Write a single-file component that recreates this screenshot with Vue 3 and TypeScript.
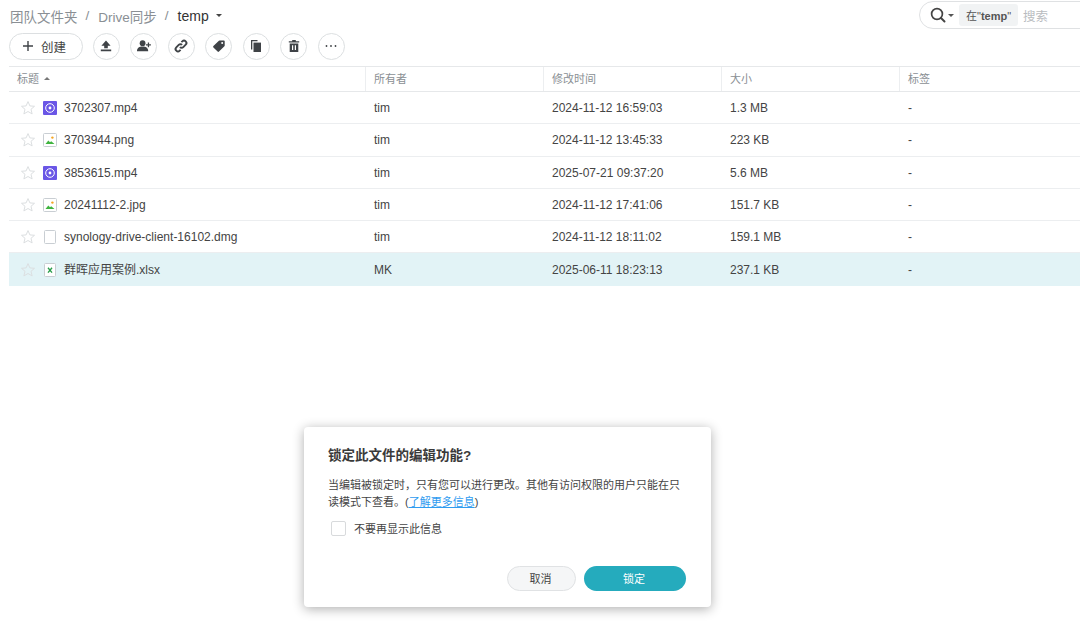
<script setup lang="ts">
interface FileRow {
  name: string
  kind: 'video' | 'image' | 'blank' | 'excel'
  owner: string
  time: string
  size: string
  selected?: boolean
}

const rows: FileRow[] = [
  { name: '3702307.mp4', kind: 'video', owner: 'tim', time: '2024-11-12 16:59:03', size: '1.3 MB' },
  { name: '3703944.png', kind: 'image', owner: 'tim', time: '2024-11-12 13:45:33', size: '223 KB' },
  { name: '3853615.mp4', kind: 'video', owner: 'tim', time: '2025-07-21 09:37:20', size: '5.6 MB' },
  { name: '20241112-2.jpg', kind: 'image', owner: 'tim', time: '2024-11-12 17:41:06', size: '151.7 KB' },
  { name: 'synology-drive-client-16102.dmg', kind: 'blank', owner: 'tim', time: '2024-11-12 18:11:02', size: '159.1 MB' },
  { name: '群晖应用案例.xlsx', kind: 'excel', owner: 'MK', time: '2025-06-11 18:23:13', size: '237.1 KB', selected: true },
]
</script>

<template>
  <div class="page">
    <div class="top">
      <nav class="crumbs">
        <span>团队文件夹</span><i>/</i><span>Drive同步</span><i>/</i><b>temp</b><em class="caret"></em>
      </nav>
      <div class="search">
        <svg width="18" height="18" viewBox="0 0 18 18"><circle cx="8" cy="8" r="5.4" fill="none" stroke="#444" stroke-width="1.7" /><path d="M12 12l3.500 3.500" stroke="#444" stroke-width="2" stroke-linecap="round" /></svg>
        <em class="caret small"></em>
        <span class="scope">在"<b>temp</b>"</span>
        <span class="hint">搜索</span>
      </div>
    </div>

    <div class="tools">
      <button class="create"><svg class="plus" viewBox="0 0 12 12"><path d="M5.300 1h1.400v4.300H11v1.400H6.700V11H5.300V6.700H1V5.300h4.300z" /></svg>创建</button>
      <button class="tool"><svg viewBox="0 0 16 16"><path d="M8 2.600 3.400 7.800h2.800v2.400h3.600V7.800h2.800zM2.800 11.400h10.400v1.800H2.800z" /></svg></button>
      <button class="tool"><svg viewBox="0 0 16 16"><circle cx="6.600" cy="5.200" r="2.900" /><path d="M1 13.200c0-3.200 2.400-4.600 5.600-4.600s5.600 1.400 5.600 4.600zM11.800 4.400h1.300v1.800h1.800v1.300h-1.800v1.800h-1.300V7.500H10V6.200h1.800z" /></svg></button>
      <button class="tool"><svg viewBox="0 0 16 16" class="line"><path d="M6.900 9.100a2.400 2.400 0 0 0 3.400 0l2.400-2.400a2.400 2.400 0 0 0-3.400-3.400L8.400 4.200M9.100 6.900a2.400 2.400 0 0 0-3.400 0L3.300 9.300a2.400 2.400 0 0 0 3.400 3.400l.9-.9" /></svg></button>
      <button class="tool"><svg viewBox="0 0 16 16"><path d="M8.600 2.400h4.300a.8.8 0 0 1 .8.800v4.300a1 1 0 0 1-.3.700l-5.400 5.400a1 1 0 0 1-1.400 0L2.400 9.400a1 1 0 0 1 0-1.400l5.500-5.300a1 1 0 0 1 .7-.3z" /><circle cx="11.200" cy="4.900" r="1" fill="#fff" /></svg></button>
      <button class="tool"><svg viewBox="0 0 16 16"><path d="M3 2h6.500v1.300H4.300v8.200H3z" /><path d="M5.500 4.600H13v9.400H5.500z" /></svg></button>
      <button class="tool"><svg viewBox="0 0 16 16"><path d="M6.200 2h3.600v1.200h3.400v1.400H2.800V3.200h3.400zM3.700 5.400h8.600V14H3.700zM6 7.300v4.800h1.200V7.300zm2.800 0v4.800H10V7.300z" /></svg></button>
      <button class="tool"><svg viewBox="0 0 16 16"><circle cx="3.500" cy="8" r=".9" /><circle cx="8" cy="8" r=".9" /><circle cx="12.500" cy="8" r=".9" /></svg></button>
    </div>

    <div class="table">
      <div class="row head">
        <div class="cell title">标题<em class="caret up"></em></div>
        <div class="cell owner">所有者</div>
        <div class="cell time">修改时间</div>
        <div class="cell size">大小</div>
        <div class="cell tag">标签</div>
      </div>
      <div v-for="r in rows" :key="r.name" class="row" :class="{ selected: r.selected }">
        <div class="cell title">
          <svg class="star" viewBox="0 0 16 16"><path d="M8 1.600l1.900 4.300 4.600.4-3.500 3 1.100 4.600L8 11.500l-4.100 2.400L5 9.300l-3.500-3 4.600-.4z" /></svg>
          <svg v-if="r.kind === 'video'" class="ficon" viewBox="0 0 14 14"><rect width="14" height="14" rx="1" fill="#6a56e6" /><circle cx="7" cy="7" r="4.300" fill="none" stroke="#fff" stroke-width="1" /><circle cx="7" cy="7" r="1.400" fill="#fff" /></svg>
          <svg v-else-if="r.kind === 'image'" class="ficon" viewBox="0 0 14 14"><rect x=".5" y=".5" width="13" height="13" rx="1" fill="#fff" stroke="#c9ced3" /><circle cx="9.400" cy="4.600" r="1.200" fill="#f5a623" /><path d="M2.500 11l2.800-3.600 1.700 1.800 1.200-1 3.300 2.800z" fill="#3fb43f" /></svg>
          <svg v-else-if="r.kind === 'blank'" class="ficon" viewBox="0 0 14 14"><rect x="1.500" y=".5" width="11" height="13" rx="1" fill="#fff" stroke="#c9ced3" /></svg>
          <svg v-else class="ficon" viewBox="0 0 14 14"><rect x="1.500" y=".5" width="11" height="13" rx="1" fill="#fff" stroke="#c9ced3" /><path d="M5 4.800l4 4.800M9 4.800L5 9.600" stroke="#2a9d4a" stroke-width="1.400" /></svg>
          <span class="fname">{{ r.name }}</span>
        </div>
        <div class="cell owner">{{ r.owner }}</div>
        <div class="cell time">{{ r.time }}</div>
        <div class="cell size">{{ r.size }}</div>
        <div class="cell tag">-</div>
      </div>
    </div>

    <section class="dialog">
      <h2>锁定此文件的编辑功能?</h2>
      <p>当编辑被锁定时，只有您可以进行更改。其他有访问权限的用户只能在只读模式下查看。(<a>了解更多信息</a>)</p>
      <label class="check"><span class="box"></span>不要再显示此信息</label>
      <div class="actions">
        <button class="cancel">取消</button>
        <button class="ok">锁定</button>
      </div>
    </section>
  </div>
</template>

<style>
html, body { margin: 0; background: #fff; overflow: hidden; }
</style>

<style scoped>
.page {
  position: relative;
  width: 1080px;
  height: 638px;
  overflow: hidden;
  background: #fff;
  font-family: "Liberation Sans", "Noto Sans CJK SC", sans-serif;
  font-size: 12px;
  color: #444;
}
.top {
  display: flex;
  justify-content: space-between;
  height: 32px;
}
.crumbs {
  display: flex;
  align-items: center;
  height: 31px;
  padding-left: 10px;
  font-size: 13.500px;
  color: #8a8f94;
}
.crumbs i { font-style: normal; margin: 0 8px; }
.crumbs span:nth-of-type(2) { margin-left: 1px; }
.crumbs b { font-weight: 400; color: #333; font-size: 14px; margin-left: 1px; }
.caret {
  display: inline-block;
  width: 0;
  height: 0;
  margin-left: 7px;
  border-left: 3.500px solid transparent;
  border-right: 3.500px solid transparent;
  border-top: 3.500px solid #444;
}
.caret.small { margin-left: 1px; border-width: 3px 3px 0; border-style: solid; border-color: #555 transparent transparent; }
.caret.up { margin-left: 5px; border-top: 0; border-bottom: 3px solid #777; border-left-width: 3px; border-right-width: 3px; vertical-align: 2px; }
.search {
  box-sizing: border-box;
  display: flex;
  align-items: center;
  width: 172px;
  height: 28px;
  margin-top: 1px;
  margin-right: -11px;
  padding-left: 9px;
  border: 1px solid #dfe1e3;
  border-radius: 14px 0 0 14px;
}
.scope {
  margin-left: 5px;
  padding: 3px 7px;
  border-radius: 3px;
  background: #f1f3f4;
  font-size: 11px;
  color: #555;
}
.scope b { font-weight: 700; }
.hint { margin-left: 5px; color: #b9bcbf; font-size: 12.500px; }
.tools {
  display: flex;
  align-items: center;
  height: 28px;
  padding-left: 9px;
  gap: 10.500px;
}
button {
  font-family: inherit;
  box-sizing: border-box;
  background: #fff;
  padding: 0;
}
.create {
  display: flex;
  align-items: center;
  width: 74px;
  height: 27px;
  margin-right: -1px;
  padding-left: 12px;
  border: 1px solid #dcdfe1;
  border-radius: 14px;
  font-size: 12.500px;
  color: #444;
}
.plus { width: 12px; height: 12px; margin-right: 7px; fill: #3f4347; }
.tool {
  display: flex;
  align-items: center;
  justify-content: center;
  width: 27px;
  height: 27px;
  border: 1px solid #dcdfe1;
  border-radius: 50%;
  color: #444;
}
.tool svg { width: 16px; height: 16px; fill: #3f4347; }
.tool svg.line { fill: none; stroke: #3f4347; stroke-width: 1.900; }
.table { margin: 6px 0 0 9px; }
.row {
  display: grid;
  grid-template-columns: 357px 178px 178px 178px 1fr;
  height: 32.300px;
  padding-top: 1px;
  box-sizing: border-box;
  border-bottom: 1px solid #eceef0;
  align-items: center;
}
.row.head {
  height: 26px;
  padding-top: 0;
  border-top: 1px solid #e6e8ea;
  border-bottom: 1px solid #e6e8ea;
  color: #8a8f94;
  font-size: 11px;
}
.head .cell {
  height: 100%;
  display: flex;
  align-items: center;
  padding-left: 7px;
  padding-bottom: 1px;
  box-sizing: border-box;
  border-right: 1px solid #eceef0;
}
.head .cell:last-child { border-right: 0; }
.row .cell { padding-left: 8px; white-space: nowrap; line-height: 16px; }
.row .title { display: flex; align-items: center; padding-left: 11px; }
.head .cell.title { padding-left: 8px; }
.selected { background: #e2f3f6; border-bottom-color: #e2f3f6; }
.star { width: 16px; height: 16px; fill: #fff; stroke: #dcdfe1; margin-right: 7px; }
.selected .star { fill: none; }
.ficon { width: 14px; height: 14px; margin-right: 7px; flex: none; }
.dialog {
  position: absolute;
  left: 304px;
  top: 427px;
  box-sizing: border-box;
  width: 407px;
  height: 180px;
  padding: 20px 24px 0;
  background: #fff;
  border-radius: 4px;
  box-shadow: 0 2px 12px rgba(0, 0, 0, .32);
}
.dialog h2 {
  margin: 0;
  font-size: 13.500px;
  line-height: 18px;
  font-weight: 700;
  color: #3a3a3a;
}
.dialog p {
  margin: 12px 0 0;
  font-size: 11px;
  line-height: 17px;
  color: #444;
}
.dialog a { color: #2f9cf0; text-decoration: underline; }
.check {
  display: flex;
  align-items: center;
  margin: 9px 0 0 3px;
  font-size: 11px;
  color: #444;
}
.box {
  box-sizing: border-box;
  width: 15px;
  height: 15px;
  margin-right: 8px;
  border: 1px solid #d8dadc;
  border-radius: 2px;
}
.actions {
  position: absolute;
  right: 25px;
  bottom: 16px;
  display: flex;
  gap: 8px;
}
.actions button {
  height: 25px;
  padding: 0 2px 2px 0;
  border-radius: 13px;
  font-size: 11px;
}
.cancel {
  width: 69px;
  border: 1px solid #e0e2e4;
  background: #f5f6f7;
  color: #444;
}
.ok {
  width: 102px;
  border: 0;
  background: #25abbd;
  color: #fff;
}
</style>
